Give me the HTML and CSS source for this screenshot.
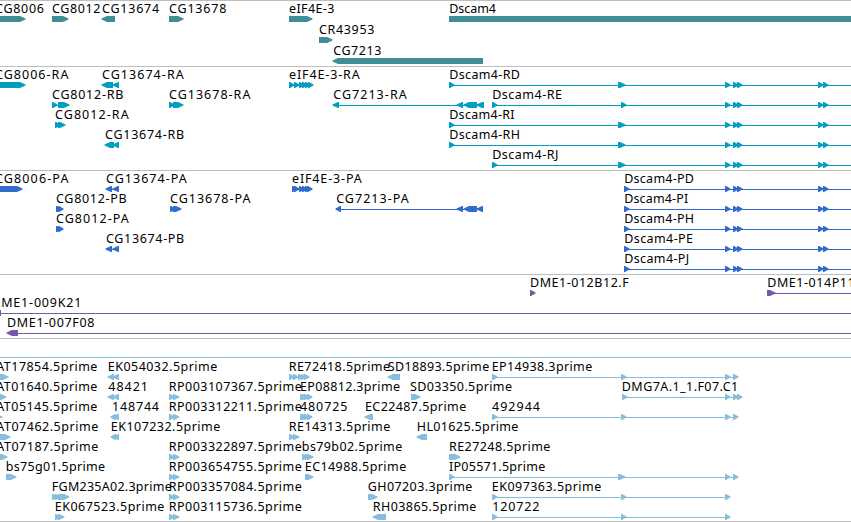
FILE: index.html
```html
<html>
    <head>
        <title>Genome Tracks</title>
        <meta charset="utf-8">
        <link rel="stylesheet" href="styles.css">
    </head>
    <body>
        <div class="tracks">
            <svg class="track gene" id="gene"></svg>
            <svg class="track transcript" id="transcript"></svg>
            <svg class="track protein" id="protein"></svg>
            <svg class="track bac" id="bac"></svg>
            <svg class="track est" id="est"></svg>
        </div>
        <script src="script.js"></script>
    </body>
</html>
```

FILE: styles.css
```css
* {
    margin: 0;
    box-sizing: border-box;
}

body {
    padding: 0;
    background-color: white;
    overflow: hidden;
}

.tracks {
    display: flex;
    flex-direction: column;
    width: 100%;
    height: 522px;
    border-bottom: 1px solid #bebebe;
}

.track {
    display: block;
    flex: none;
    width: 100%;
    border-top: 1px solid #bebebe;
    overflow: hidden;
}

.track text {
    font-family: "Noto Sans", "DejaVu Sans", sans-serif;
    font-size: 12.5px;
    fill: black;
}

.gene {
    height: 66px;
    color: #3f8e95;
}

.transcript {
    height: 104px;
    color: #009fc0;
}

.protein {
    height: 104px;
    color: #316ccd;
}

.bac {
    height: 64px;
    color: #7659a9;
}

.est {
    height: 183px;
    color: #87bddd;
}

.exon,
.intron {
    fill: currentColor;
}

.intron {
    shape-rendering: crispEdges;
}
```

FILE: script.js
```js
const SVG = "http://www.w3.org/2000/svg";
const END = [900, 906];

// exons that many features share
const tail = [[725, 730], [733, 738], [737, 742], [818, 823], [823, 828], END];
const longRna = [[449, 454], [618, 625]].concat(tail);
const shortRna = [[492, 497], [621, 626]].concat(tail);
const dscamProtein = [[624, 629]].concat(tail);
const estEnd = [[492, 497], [621, 626], [725, 730]];
const rp = [[169, 174], [173, 179]];
const ep = [[300, 305], [302, 307], [304, 309], [307, 312]];

// [row, label, label start, label end, strand, exons]
const tracks = {
    gene: [
        [0, "CG8006", -4.3, 43.3, "+", [[-10, 25]]],
        [0, "CG8012", 52.7, 99.7, "+", [[52, 68]]],
        [0, "CG13674", 102.7, 158.5, "-", [[102, 115]]],
        [0, "CG13678", 169.7, 225.7, "+", [[169, 183]]],
        [0, "eIF4E-3", 289.7, 333.7, "+", [[289, 312]]],
        [0, "Dscam4", 449.9, 495.3, "+", [[449, 906]]],
        [1, "CR43953", 319.7, 373.7, "+", [[319, 332]]],
        [2, "CG7213", 333.9, 380.7, "-", [[333, 483]]]
    ],
    transcript: [
        [0, "CG8006-RA", -4.3, 67.7, "+", [[-10, 25]]],
        [0, "CG13674-RA", 102.7, 183, "-", [[102, 113], [113, 119]]],
        [0, "eIF4E-3-RA", 289.7, 359, "+", [[289, 294], [294, 299], [299, 304], [302, 307], [305, 310], [308, 313]]],
        [0, "Dscam4-RD", 449.9, 519.3, "+", longRna],
        [1, "CG8012-RB", 52.7, 122.7, "+", [[52, 57], [58, 69]]],
        [1, "CG13678-RA", 169.7, 249.7, "+", [[169, 174], [173, 183]]],
        [1, "CG7213-RA", 333.9, 406, "-", [[333, 339], [457, 463], [464, 477], [477, 484]]],
        [1, "Dscam4-RE", 492.9, 561.3, "+", shortRna],
        [2, "CG8012-RA", 55.7, 128, "+", [[55, 60], [58, 65]]],
        [2, "Dscam4-RI", 449.9, 513.8, "+", longRna],
        [3, "CG13674-RB", 105.7, 183.5, "-", [[105, 114], [113, 119]]],
        [3, "Dscam4-RH", 449.9, 519.3, "+", longRna],
        [4, "Dscam4-RJ", 492.9, 557.7, "+", [[492, 497], [618, 625]].concat(tail)]
    ],
    protein: [
        [0, "CG8006-PA", -4.3, 67.7, "+", [[-10, 22]]],
        [0, "CG13674-PA", 106.7, 186, "-", [[106, 112], [113, 119]]],
        [0, "eIF4E-3-PA", 292.7, 361, "+", [[292, 297], [294, 299], [299, 304], [302, 307], [305, 310], [307, 312]]],
        [0, "Dscam4-PD", 624.9, 693.3, "+", dscamProtein],
        [1, "CG8012-PB", 56.7, 126, "+", [[56, 61], [58, 63]]],
        [1, "CG13678-PA", 170.7, 249.7, "+", [[170, 175], [173, 181]]],
        [1, "CG7213-PA", 336.9, 408, "-", [[336, 341], [457, 463], [464, 477], [477, 483]]],
        [1, "Dscam4-PI", 624.9, 687.5, "+", dscamProtein],
        [2, "CG8012-PA", 56.7, 128, "+", [[56, 61], [58, 63]]],
        [2, "Dscam4-PH", 624.9, 693.3, "+", dscamProtein],
        [3, "CG13674-PB", 106.7, 183.5, "-", [[106, 112], [113, 119]]],
        [3, "Dscam4-PE", 624.9, 692.3, "+", dscamProtein],
        [4, "Dscam4-PJ", 624.9, 688.5, "+", dscamProtein]
    ],
    bac: [
        [0, "DME1-012B12.F", 530.7, 628, "+", [[530, 535]]],
        [0, "DME1-014P11", 767.9, 854, "+", [[767, 775], END]],
        [1, "DME1-009K21", -8, 80.7, "-", [[-8, 1], END]],
        [2, "DME1-007F08", 7.7, 93.7, "-", [[7, 18], END]]
    ],
    est: [
        [0, "", 0, 0, "+", [[-20, -10], END]],
        [1, "AT17854.5prime", -3, 96.7, "+", [[-5, 8]]],
        [1, "EK054032.5prime", 108.5, 216.5, "-", [[108, 114], [113, 119]]],
        [1, "RE72418.5prime", 289.5, 389.3, "+", [[289, 294], [293, 298], [298, 303], [301, 306], [304, 309]]],
        [1, "SD18893.5prime", 388.5, 488.5, "-", [[388, 400]]],
        [1, "EP14938.3prime", 492.5, 591.5, "+", estEnd.concat([[733, 738]])],
        [2, "AT01640.5prime", -3, 96.7, "+", [[-5, 6]]],
        [2, "48421", 109, 147.3, "-", [[108, 114], [113, 119]]],
        [2, "RP003107367.5prime", 169.5, 301, "+", rp],
        [2, "EP08812.3prime", 300.7, 399.3, "+", ep],
        [2, "SD03350.5prime", 410.7, 511.3, "+", [[411, 420]]],
        [2, "DMG7A.1_1.F07.C1", 622.5, 737.5, "+", [[622, 627], [725, 730], [733, 738], [737, 742]]],
        [3, "AT05145.5prime", -3, 96.7, "+", [[-5, 2]]],
        [3, "148744", 112.7, 158.3, "-", [[111, 116], [114, 119]]],
        [3, "RP003312211.5prime", 169.5, 301, "+", rp],
        [3, "480725", 300.7, 346.7, "+", ep],
        [3, "EC22487.5prime", 365.7, 465.5, "-", [[365, 373]]],
        [3, "492944", 492.7, 539.3, "+", estEnd.concat([[733, 738]])],
        [4, "AT07462.5prime", -3, 97.5, "+", [[-5, 10]]],
        [4, "EK107232.5prime", 111.5, 219.5, "-", [[111, 116], [114, 119]]],
        [4, "RE14313.5prime", 289.5, 389.5, "+", [[289, 294], [293, 299]]],
        [4, "HL01625.5prime", 417.5, 517.7, "-", [[417, 427]]],
        [5, "AT07187.5prime", -3, 97.5, "+", [[-5, 7]]],
        [5, "RP003322897.5prime", 169.5, 301, "+", rp],
        [5, "bs79b02.5prime", 302.5, 401.5, "+", [[302, 307], [305, 310], [307, 313]]],
        [5, "RE27248.5prime", 449.7, 549.7, "+", [[449, 460]]],
        [6, "bs75g01.5prime", 6.5, 104.3, "+", [[6, 16]]],
        [6, "RP003654755.5prime", 169.5, 301, "+", rp],
        [6, "EC14988.5prime", 305.5, 405.5, "+", [[305, 313]]],
        [6, "IP05571.5prime", 449.7, 544.5, "+", [[449, 454], [618, 625], [725, 730], [733, 738]]],
        [7, "FGM235A02.3prime", 52.5, 171, "+", [[52, 57], [55, 60], [58, 69]]],
        [7, "RP003357084.5prime", 169.5, 301, "+", rp],
        [7, "GH07203.3prime", 368.5, 471.7, "+", [[368, 377]]],
        [7, "EK097363.5prime", 492.5, 600.5, "+", estEnd],
        [8, "EK067523.5prime", 55.5, 163.7, "+", [[55, 60], [58, 64]]],
        [8, "RP003115736.5prime", 169.5, 301, "+", rp],
        [8, "RH03865.5prime", 373.5, 475.7, "-", [[373, 386]]],
        [8, "120722", 493, 538.7, "+", estEnd]
    ]
};

function add(parent, name, attrs) {
    const el = document.createElementNS(SVG, name);
    for (const key in attrs) {
        el.setAttribute(key, attrs[key]);
    }
    parent.appendChild(el);
    return el;
}

function drawExon(svg, x1, x2, y, strand) {
    const head = Math.min(x2 - x1, 6);
    let points;
    if (strand === "+") {
        points = [x1, y, x2 - head + 1, y, x2 + 0.5, y + 2.6, x2 + 0.5, y + 3.4, x2 - head + 1, y + 6, x1, y + 6];
    } else {
        points = [x2, y, x1 + head - 1, y, x1 - 0.5, y + 2.6, x1 - 0.5, y + 3.4, x1 + head - 1, y + 6, x2, y + 6];
    }
    add(svg, "polygon", { class: "exon", points: points.join(" ") });
}

function drawTrack(id) {
    const svg = document.getElementById(id);
    const rowHeight = id === "gene" ? 21 : 20;
    for (const [row, label, start, end, strand, exons] of tracks[id]) {
        const y = row * rowHeight + 15;
        const first = exons[0][0];
        const last = exons[exons.length - 1][1];
        if (exons.length > 1) {
            add(svg, "rect", { class: "intron", x: first + 1, y: y + 3, width: last - first - 2, height: 1 });
        }
        for (const [x1, x2] of exons) {
            drawExon(svg, x1, x2, y, strand);
        }
        if (label) {
            const text = add(svg, "text", { x: start - 0.7, y: y - 3, textLength: end - start + 1.4 });
            text.textContent = label;
        }
    }
}

for (const id in tracks) {
    drawTrack(id);
}
```
